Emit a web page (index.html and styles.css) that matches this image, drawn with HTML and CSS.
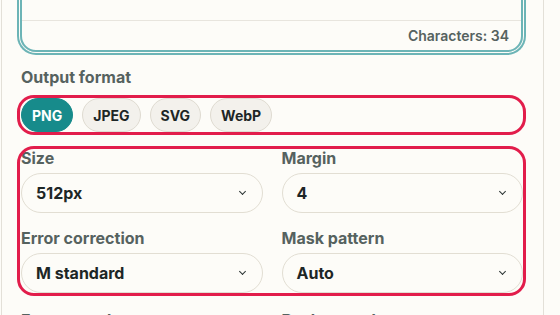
FILE: index.html
```html
<!DOCTYPE html>
<html lang="en">
<head>
  <meta charset="UTF-8">
  <title>QR Code Generator</title>
  <link rel="stylesheet" href="styles.css">
</head>
<body>
  <div class="panel">
    <div class="textbox">
      <textarea class="text-input">https://example.com/hello-world-qr</textarea>
      <div class="count">Characters: 34</div>
    </div>

    <div class="field">
      <div class="label">Output format</div>
      <div class="chips highlight">
        <button class="chip active">PNG</button>
        <button class="chip">JPEG</button>
        <button class="chip">SVG</button>
        <button class="chip">WebP</button>
      </div>
    </div>

    <div class="grid highlight">
      <div class="cell">
        <div class="label">Size</div>
        <div class="select">512px <span class="chev"></span></div>
      </div>
      <div class="cell">
        <div class="label">Margin</div>
        <div class="select">4 <span class="chev"></span></div>
      </div>
      <div class="cell">
        <div class="label">Error correction</div>
        <div class="select">M standard <span class="chev"></span></div>
      </div>
      <div class="cell">
        <div class="label">Mask pattern</div>
        <div class="select">Auto <span class="chev"></span></div>
      </div>
    </div>

    <div class="grid colors">
      <div class="cell">
        <div class="label">Foreground</div>
        <div class="select">#000000</div>
      </div>
      <div class="cell">
        <div class="label">Background</div>
        <div class="select">#ffffff</div>
      </div>
    </div>
  </div>
</body>
</html>
```

FILE: styles.css
```css
html, body {
  margin: 0;
  background: #fdfcf8;
  font-family: 'Inter', 'Liberation Sans', sans-serif;
  color: #1d2626;
  overflow: hidden;
}

.panel {
  margin: -40px 16px 0 1px;
  padding: 0 20px 40px 18px;
  border-left: 1px solid #e3e0d8;
  border-right: 1px solid #e3e0d8;
}

.textbox {
  border: 2px solid #6cb4b6;
  border-radius: 16px;
  box-shadow: 0 0 0 1px #fdfcf8, 0 0 0 3px #6cb4b6;
  overflow: hidden;
}

.text-input {
  display: block;
  width: 100%;
  height: 59px;
  box-sizing: border-box;
  border: none;
  border-bottom: 1px solid #e8e5de;
  background: transparent;
  resize: none;
  outline: none;
  color: transparent;
  font-family: inherit;
}

.count {
  height: 29px;
  line-height: 29px;
  padding-right: 12px;
  text-align: right;
  font-size: 14px;
  font-weight: 600;
  color: #56625f;
}

.field {
  margin-top: 16px;
}

.label {
  font-size: 16px;
  font-weight: 700;
  line-height: 19px;
  color: #56625f;
  margin-bottom: 11px;
  padding-left: 1px;
}

.highlight {
  outline: 3px solid #e21d4b;
  border-radius: 14px;
}

.chips {
  display: flex;
  gap: 9px;
  padding-left: 1px;
}

.chip {
  height: 34px;
  padding: 0 10px;
  border: 1px solid #dfdbd1;
  border-radius: 17px;
  background: #f3f1ec;
  font-family: inherit;
  font-size: 14px;
  font-weight: 700;
  color: #1d2626;
}

.chip.active {
  background: #178b8b;
  border-color: #178b8b;
  color: #fff;
}

.grid {
  display: grid;
  grid-template-columns: 1fr 1fr;
  column-gap: 18px;
  row-gap: 16px;
  margin-top: 17px;
}

.grid .label {
  margin-bottom: 5px;
}

.colors {
  margin-top: 18px;
}

.select {
  height: 40px;
  box-sizing: border-box;
  border: 1px solid #e2ded3;
  border-radius: 20px;
  padding: 0 17px 0 14px;
  margin-left: 1px;
  display: flex;
  align-items: center;
  justify-content: space-between;
  font-size: 16px;
  font-weight: 700;
}

.chev {
  width: 4px;
  height: 4px;
  border-right: 1.5px solid #2a3333;
  border-bottom: 1.5px solid #2a3333;
  transform: translateY(-2px) rotate(45deg);
}
```
